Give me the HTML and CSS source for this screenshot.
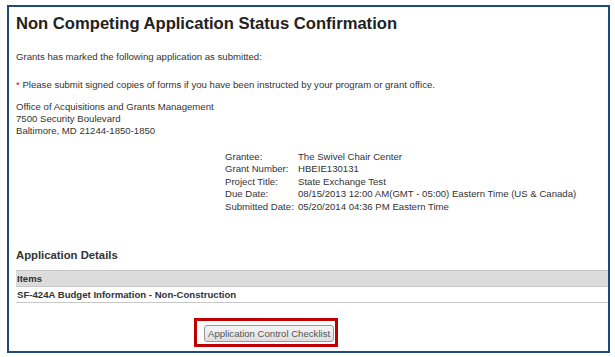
FILE: index.html
```html
<!DOCTYPE html>
<html lang="en">
<head>
    <meta charset="UTF-8">
    <title>Application Status Confirmation</title>
    <link rel="stylesheet" href="styles.css">
</head>
<body>
    <div class="frame">
        <h1 class="page-title">Non Competing Application Status Confirmation</h1>

        <p class="intro">Grants has marked the following application as submitted:</p>

        <p class="notice"><span class="req">*</span> Please submit signed copies of forms if you have been instructed by your program or grant office.</p>

        <!-- Office address -->
        <div class="address">
            <div>Office of Acquisitions and Grants Management</div>
            <div>7500 Security Boulevard</div>
            <div>Baltimore, MD 21244-1850-1850</div>
        </div>

        <!-- Grant summary -->
        <div class="summary">
            <span class="label">Grantee:</span><span>The Swivel Chair Center</span>
            <span class="label">Grant Number:</span><span>HBEIE130131</span>
            <span class="label">Project Title:</span><span>State Exchange Test</span>
            <span class="label">Due Date:</span><span>08/15/2013 12:00 AM(GMT - 05:00) Eastern Time (US &amp; Canada)</span>
            <span class="label">Submitted Date:</span><span>05/20/2014 04:36 PM Eastern Time</span>
        </div>

        <h2 class="section-title">Application Details</h2>
        <table class="items">
            <tr><th>Items</th></tr>
            <tr><td>SF-424A Budget Information - Non-Construction</td></tr>
        </table>

        <div class="actions">
            <div class="highlight">
                <button class="btn">Application Control Checklist</button>
            </div>
        </div>
    </div>
</body>
</html>
```

FILE: styles.css
```css
body {
    margin: 0;
    background: #fff;
    font-family: "Liberation Sans", Arial, sans-serif;
    font-size: 9.6px;
    color: #333;
}

.frame {
    margin: 5px 0 0 7px;
    width: 592px;
    height: 344px;
    border: 2px solid #1d4c7a;
    padding: 0 0 0 7px;
    overflow: hidden;
}

.page-title {
    margin: 7px 0 0 0;
    font-size: 16.6px;
    font-weight: bold;
    color: #222;
    line-height: 20px;
}

.intro {
    margin: 17px 0 0 0;
    line-height: 12px;
}

.notice {
    margin: 16px 0 0 0;
    line-height: 12px;
}

.req {
    color: #d00;
}

.address {
    margin-top: 10px;
    line-height: 12px;
}

.summary {
    margin: 14px 0 0 209px;
    display: grid;
    grid-template-columns: 73px auto;
    line-height: 12.4px;
    white-space: nowrap;
}

.section-title {
    margin: 35px 0 0 0;
    font-size: 11.3px;
    font-weight: bold;
    color: #333;
    line-height: 14px;
}

.items {
    margin-top: 8px;
    width: 100%;
    border-collapse: collapse;
}

.items th,
.items td {
    text-align: left;
    font-weight: bold;
    padding: 0 1px;
    height: 15px;
    line-height: 15px;
    border-top: 1px solid #c8c8c8;
    border-bottom: 1px solid #c8c8c8;
}

.items th {
    background: #dcdcdc;
}

.actions {
    display: flex;
    padding-left: 178px;
    margin-top: 15px;
}

.highlight {
    border: 3px solid #c00000;
    padding: 4px 1px 2px 7px;
}

.btn {
    font-family: "Liberation Sans", Arial, sans-serif;
    font-size: 9.6px;
    color: #555;
    background: linear-gradient(#f6f6f6, #dedede);
    border: 1px solid #999;
    border-radius: 3px;
    padding: 0 3px;
    height: 17px;
    display: block;
}
```
